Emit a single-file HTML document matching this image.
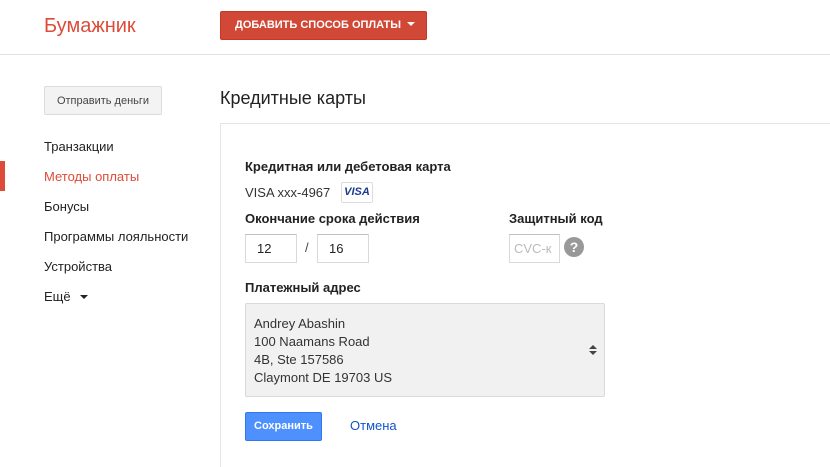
<!DOCTYPE html>
<html><head><meta charset="utf-8"><style>
*{box-sizing:border-box;margin:0;padding:0}
html,body{width:830px;height:467px;overflow:hidden}
body{background:#fff;font-family:"Liberation Sans",Arial,sans-serif;color:#222;position:relative;font-size:13px}
.a{position:absolute;white-space:nowrap}
.hdr{position:absolute;left:0;top:0;width:830px;height:55px;border-bottom:1px solid #e0e0e0}
.logo{left:44px;top:15px;font-size:20px;color:#dd4b39}
.add{left:220px;top:11px;width:207px;height:29px;background:#d14836;border:1px solid #c53727;border-radius:2px;color:#fff;font-size:11px;font-weight:bold;line-height:27px;padding-left:14px}
.send{left:44px;top:86px;width:118px;height:29px;background:#f3f3f3;border:1px solid #dcdcdc;border-radius:2px;font-size:11px;color:#444;line-height:29px;text-align:center}
.nav{left:44px;font-size:13px;color:#222}
.title{left:220px;top:88px;font-size:18px;color:#222}
.panel{position:absolute;left:220px;top:123px;width:610px;height:344px;border-left:1px solid #e5e5e5;border-top:1px solid #e5e5e5}
.lbl{font-weight:bold;font-size:13px;color:#222}
.inp{position:absolute;height:29px;border:1px solid #d9d9d9;border-top-color:#c0c0c0;font-size:13px;line-height:27px;padding-left:11px;background:#fff}
</style></head><body>
<div class="hdr"></div>
<div class="a logo">Бумажник</div>
<div class="a add">ДОБАВИТЬ СПОСОБ ОПЛАТЫ <span style="display:inline-block;border:4px solid transparent;border-top:4px solid #fff;border-bottom:0;vertical-align:2px;margin-left:3px"></span></div>
<div class="a send">Отправить деньги</div>
<div class="a nav" style="top:139px">Транзакции</div>
<div class="a" style="left:0;top:161px;width:5px;height:30px;background:#dd4b39"></div>
<div class="a nav" style="top:169px;color:#dd4b39">Методы оплаты</div>
<div class="a nav" style="top:199px">Бонусы</div>
<div class="a nav" style="top:229px">Программы лояльности</div>
<div class="a nav" style="top:259px">Устройства</div>
<div class="a nav" style="top:289px">Ещё <span style="display:inline-block;border:4px solid transparent;border-top:4px solid #222;border-bottom:0;vertical-align:2px;margin-left:6px"></span></div>
<div class="a title">Кредитные карты</div>
<div class="panel"></div>
<div class="a lbl" style="left:245px;top:159px">Кредитная или дебетовая карта</div>
<div class="a" style="left:245px;top:185px;color:#333">VISA xxx-4967</div>
<div class="a" style="left:341px;top:182px;width:32px;height:21px;border:1px solid #ddd;border-radius:2px;font:italic bold 11px 'Liberation Sans';color:#1a3d8f;line-height:19px;text-align:center">VISA</div>
<div class="a lbl" style="left:245px;top:211px">Окончание срока действия</div>
<div class="a lbl" style="left:509px;top:211px">Защитный код</div>
<div class="inp" style="left:245px;top:234px;width:52px">12</div>
<div class="a" style="left:305px;top:240px;color:#444">/</div>
<div class="inp" style="left:317px;top:234px;width:52px">16</div>
<div class="inp" style="left:509px;top:234px;width:51px;color:#bbb;overflow:hidden;padding-left:4px">CVC-к</div>
<div class="a" style="left:564px;top:237px;width:20px;height:20px;border-radius:50%;background:#999;color:#fff;font-weight:bold;font-size:14px;text-align:center;line-height:20px">?</div>
<div class="a lbl" style="left:245px;top:280px">Платежный адрес</div>
<div class="a" style="left:245px;top:303px;width:360px;height:94px;background:#f1f1f1;border:1px solid #d9d9d9;border-radius:2px"></div>
<div class="a" style="left:254px;top:315px;line-height:18px;color:#333">Andrey Abashin<br>100 Naamans Road<br>4B, Ste 157586<br>Claymont DE 19703 US</div>
<div class="a" style="left:589px;top:345px;border:4px solid transparent;border-bottom:4px solid #444;border-top:0"></div>
<div class="a" style="left:589px;top:351px;border:4px solid transparent;border-top:4px solid #444;border-bottom:0"></div>
<div class="a" style="left:245px;top:412px;width:77px;height:29px;background:#4d90fe;border:1px solid #3079ed;border-radius:2px;color:#fff;font-size:11px;font-weight:bold;text-align:center;line-height:27px">Сохранить</div>
<div class="a" style="left:350px;top:418px;color:#1155cc">Отмена</div>
</body></html>
